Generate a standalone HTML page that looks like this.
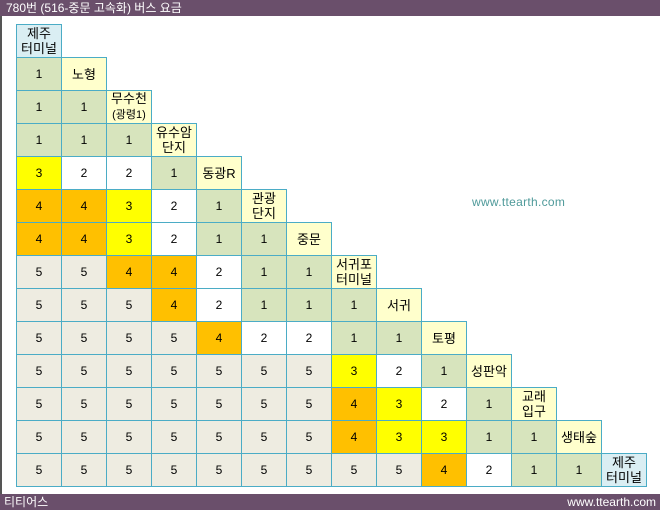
<!DOCTYPE html>
<html><head><meta charset="utf-8"><style>
*{margin:0;padding:0;box-sizing:border-box}
body{width:660px;height:510px;position:relative;background:#fff;font-family:"Liberation Sans","Noto Sans CJK KR","NanumGothic",sans-serif;overflow:hidden}
.bar{position:absolute;left:0;width:660px;background:#6a4f6b;color:#fff;font-size:12px;line-height:16px}
.c{position:absolute;width:46px;height:34px;border:1px solid #4bacc6;display:flex;align-items:center;justify-content:center;text-align:center;font-size:12px;line-height:15px;color:#000}
.s,.t{font-size:13px}
.g{background:#d7e4bd}.w{background:#fff}.y{background:#ffff00}.o{background:#ffc000}.b{background:#eeece1}.s{background:#ffffcc}.t{background:#daeef3}
</style></head><body>
<div style="position:absolute;left:0;top:0;width:2px;height:510px;background:#555"></div>
<div class="bar" style="top:0;height:16px;padding-left:6px">780번 (516-중문 고속화) 버스 요금</div>
<div class="bar" style="top:494px;height:16px;padding-left:4px">티티어스<span style="position:absolute;right:4px;top:0">www.ttearth.com</span></div>
<div style="position:absolute;left:472px;top:195px;font-size:12px;color:#4f9a9a;letter-spacing:0.3px">www.ttearth.com</div>
<div id="g"></div>
<script>
var rows=[
["제주<br>터미널"],
["1","노형"],
["1","1","무수천<br><span style='font-size:11px'>(광령1)</span>"],
["1","1","1","유수암<br>단지"],
["3","2","2","1","동광R"],
["4","4","3","2","1","관광<br>단지"],
["4","4","3","2","1","1","중문"],
["5","5","4","4","2","1","1","서귀포<br>터미널"],
["5","5","5","4","2","1","1","1","서귀"],
["5","5","5","5","4","2","2","1","1","토평"],
["5","5","5","5","5","5","5","3","2","1","성판악"],
["5","5","5","5","5","5","5","4","3","2","1","교래<br>입구"],
["5","5","5","5","5","5","5","4","3","3","1","1","생태숲"],
["5","5","5","5","5","5","5","5","5","4","2","1","1","제주<br>터미널"]];
var cls={"1":"g","2":"w","3":"y","4":"o","5":"b"};
var h="";
rows.forEach(function(r,i){r.forEach(function(v,j){
var k=j==r.length-1?((i==0||i==13)?"t":"s"):cls[v];
h+='<div class="c '+k+'" style="left:'+(16+45*j)+'px;top:'+(24+33*i)+'px">'+(j==r.length-1?'<div>'+v+'</div>':v)+'</div>';});});
document.getElementById("g").innerHTML=h;
</script>
</body></html>
